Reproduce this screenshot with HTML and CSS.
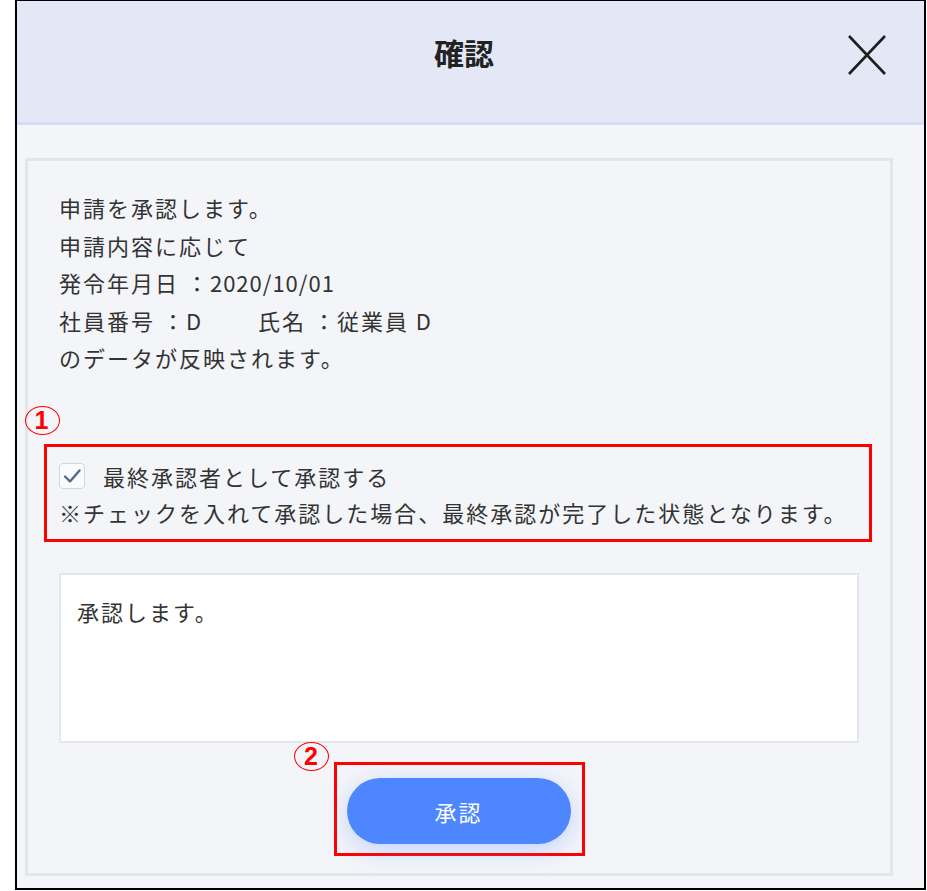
FILE: index.html
```html
<!DOCTYPE html>
<html lang="ja">
<head>
    <meta charset="UTF-8">
    <meta name="viewport" content="width=device-width, initial-scale=1.0">
    <title>確認</title>
    <link rel="stylesheet" href="styles.css">
</head>
<body>
    <div class="frame">
        <header class="head">
            <span></span>
            <h1 class="title">確認</h1>
            <button class="close" aria-label="閉じる">
                <svg width="38" height="40" viewBox="0 0 38 40">
                    <path d="M1 1 L37 39 M37 1 L1 39" stroke="#1e1e1e" stroke-width="2.6" fill="none"/>
                </svg>
            </button>
        </header>

        <main class="panel">
            <div class="message">
                <p>申請を承認します。</p>
                <p>申請内容に応じて</p>
                <p>発令年月日 ：<span class="num">2020/10/01</span></p>
                <p>社員番号 ：D　　 氏名 ：従業員 D</p>
                <p>のデータが反映されます。</p>
            </div>

            <div class="mark check-area">
                <span class="badge badge-1">1</span>
                <label class="check-row">
                    <input type="checkbox" checked>
                    <span class="check-box">
                        <svg width="26" height="26" viewBox="0 0 26 26">
                            <path d="M6 13.5 L11 18.5 L20.5 7.5" stroke="#56668e" stroke-width="2.4" fill="none" stroke-linecap="round" stroke-linejoin="round"/>
                        </svg>
                    </span>
                    最終承認者として承認する
                </label>
                <p class="note">※チェックを入れて承認した場合、最終承認が完了した状態となります。</p>
            </div>

            <textarea class="comment">承認します。</textarea>

            <div class="actions">
                <div class="mark btn-area">
                    <span class="badge badge-2">2</span>
                    <button class="approve">承認</button>
                </div>
            </div>
        </main>
    </div>
</body>
</html>
```

FILE: styles.css
```css
* {
    margin: 0;
    padding: 0;
    box-sizing: border-box;
}
body {
    font-family: "Noto Sans CJK JP", "Noto Sans", sans-serif;
    background: #fff;
    color: #333;
}
.frame {
    margin-left: 15px;
    width: 911px;
    border: 2px solid #000;
    border-top-width: 1px;
    background: #f4f5f9;
    padding-bottom: 12px;
}
.head {
    height: 124px;
    display: grid;
    grid-template-columns: 1fr auto 1fr;
    align-items: center;
    padding: 0 13px 10px 0;
    background: #e4e7f6;
    border-bottom: 3px solid #d6daf2;
}
.title {
    font-size: 30px;
    font-weight: 700;
    color: #222;
    line-height: 1;
    margin-bottom: 10px;
}
.close {
    justify-self: end;
    margin: 0 25px 4px 0;
    width: 38px;
    height: 40px;
    border: none;
    background: none;
    cursor: pointer;
}
.close svg {
    display: block;
}
.panel {
    margin: 33px 31px 0 8px;
    border: 3px solid #e4e5e9;
    padding: 28px 31px 17px;
    background: #f4f5f9;
}
.message {
    font-size: 22px;
    letter-spacing: 2px;
    line-height: 37.5px;
    color: #333;
}
.num {
    letter-spacing: 1px;
}
.mark {
    position: relative;
    border: 3px solid #ff0000;
}
.badge {
    position: absolute;
    width: 35px;
    height: 29px;
    border: 1.5px solid #ff0000;
    border-radius: 50%;
    display: flex;
    align-items: center;
    justify-content: center;
    color: #ff0000;
    font-family: "Liberation Sans", sans-serif;
    font-weight: 700;
    font-size: 25px;
    line-height: 1;
}
.badge-1 {
    left: -22px;
    top: -41px;
}
.badge-2 {
    left: -43px;
    top: -23px;
}
.check-area {
    margin: 67px -13px 0 -15px;
    padding: 11px 10px 9px 12px;
    font-size: 22px;
    letter-spacing: 2px;
    line-height: 36px;
    color: #333;
}
.check-row {
    display: flex;
    align-items: center;
    gap: 18px;
    cursor: pointer;
}
.check-row input {
    display: none;
}
.check-box {
    width: 26px;
    height: 26px;
    border: 1.5px solid #d3d6dd;
    border-radius: 4px;
    background: #fafbfc;
    display: flex;
    align-items: center;
    justify-content: center;
}
.check-box svg {
    display: block;
    flex: none;
}
.comment {
    display: block;
    width: 100%;
    height: 170px;
    margin-top: 31px;
    border: 2px solid #e6e7ea;
    background: #fff;
    padding: 18px 16px;
    font-family: inherit;
    font-size: 22px;
    letter-spacing: 2px;
    line-height: 36px;
    color: #333;
    resize: none;
    outline: none;
}
.actions {
    display: flex;
    justify-content: center;
    margin-top: 19px;
}
.btn-area {
    padding: 13px 11px 9px 10px;
}
.approve {
    display: block;
    width: 224px;
    height: 66px;
    border: none;
    border-radius: 33px;
    background: #4d86fe;
    color: #fff;
    font-family: inherit;
    font-size: 22px;
    letter-spacing: 2px;
    box-shadow: 0 6px 24px rgba(77, 134, 254, 0.3);
    cursor: pointer;
}
```
